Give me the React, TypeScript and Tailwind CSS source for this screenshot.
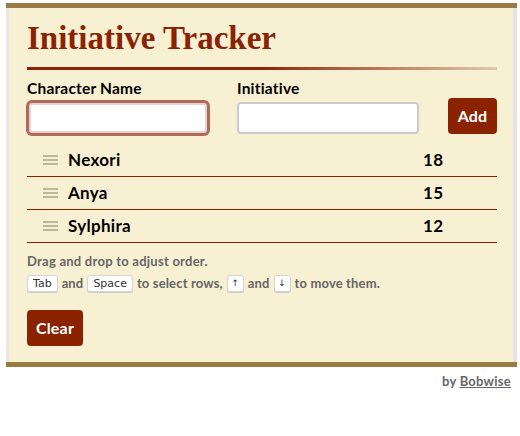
import React, { useState } from 'react';

interface Combatant {
  name: string;
  initiative: number;
}

const initialList: Combatant[] = [
  { name: 'Nexori', initiative: 18 },
  { name: 'Anya', initiative: 15 },
  { name: 'Sylphira', initiative: 12 },
];

const Kbd: React.FC<{ children: React.ReactNode; small?: boolean }> = ({ children, small }) => (
  <kbd
    className={`inline-flex items-center justify-center h-[17px] bg-white border border-[#d4d4d4] rounded-[3px] font-normal text-[#333] shadow-[0_1px_0_#ccc] [font-family:'DejaVu_Sans',sans-serif] leading-none tracking-normal ${
      small ? 'w-[17px] text-[9px]' : 'px-[5px] text-[11px]'
    }`}
  >
    {children}
  </kbd>
);

const DragHandle: React.FC = () => (
  <svg width="15" height="10" viewBox="0 0 15 10" className="shrink-0">
    <rect x="0" y="0" width="15" height="2" fill="#bdb79b" />
    <rect x="0" y="4" width="15" height="2" fill="#bdb79b" />
    <rect x="0" y="8" width="15" height="2" fill="#bdb79b" />
  </svg>
);

const App: React.FC = () => {
  const [list, setList] = useState<Combatant[]>(initialList);
  const [name, setName] = useState('');
  const [init, setInit] = useState('');

  const add = () => {
    if (!name.trim()) return;
    const next = [...list, { name: name.trim(), initiative: Number(init) || 0 }];
    next.sort((a, b) => b.initiative - a.initiative);
    setList(next);
    setName('');
    setInit('');
  };

  return (
    <div className="w-[520px] min-h-[436px] bg-white pt-[3px] [font-family:Lato,'Open_Sans',sans-serif] text-black">
      {/* Card */}
      <div className="ml-[6px] w-[511px] border-y-[5px] border-[#9a7b43]">
        <div className="bg-[#f8f0d3] border-l-[3px] border-r-[4px] border-l-[#e9e7e2] border-r-[#e4e3e6] pl-[18px] pr-[16px] pt-[10px] pb-[16px]">
          <h1 className="text-[33px] leading-[40px] font-bold text-[#8b2300] [font-family:'Liberation_Serif',serif]">
            Initiative Tracker
          </h1>
          <div className="mt-[9px] h-[3px] bg-gradient-to-r from-[#8b2300] via-[#8b2300] to-[#dccbaa]" />

          {/* Form */}
          <div className="mt-[8px] flex items-start">
            <div className="flex flex-col w-[182px]">
              <label className="text-[15.5px] font-bold leading-[20px] tracking-[0.2px]">Character Name</label>
              <input
                autoFocus
                value={name}
                onChange={(e) => setName(e.target.value)}
                className="mt-[5px] ml-[2px] h-[30px] w-[178px] bg-white rounded-[3px] border-2 border-[#e4d3d3] outline-none ring-[3px] ring-[#b06a57] px-[4px] text-[15px]"
              />
            </div>
            <div className="flex flex-col ml-[28px] w-[182px]">
              <label className="text-[15.5px] font-bold leading-[20px] tracking-[0.2px]">Initiative</label>
              <input
                value={init}
                onChange={(e) => setInit(e.target.value)}
                className="mt-[4px] h-[32px] w-[182px] bg-white rounded-[4px] border-2 border-[#cccccc] outline-none px-2 text-[15px]"
              />
            </div>
            <button
              onClick={add}
              className="ml-auto mt-[20px] h-[36px] w-[49px] rounded-[4px] bg-[#8b2300] text-white text-[16px] font-bold tracking-[0.2px]"
            >
              Add
            </button>
          </div>

          {/* List */}
          <ul className="mt-[10px]">
            {list.map((c) => (
              <li key={c.name} className="flex items-center h-[33px] border-b border-[#8b2300] pl-[16px]">
                <DragHandle />
                <span className="ml-[10px] text-[17px] font-bold flex-1 tracking-[0.3px]">{c.name}</span>
                <span className="w-[74px] text-[17px] font-bold tracking-[0.3px]">{c.initiative}</span>
              </li>
            ))}
          </ul>

          {/* Help */}
          <p className="mt-[9px] text-[13px] font-bold text-[#666] leading-[18px] tracking-[0.25px]">
            Drag and drop to adjust order.
          </p>
          <p className="mt-[4px] text-[13px] font-bold text-[#666] leading-[18px] tracking-[0.15px] flex items-center gap-[4px]">
            <Kbd>Tab</Kbd> and <Kbd>Space</Kbd> to select rows, <Kbd small>↑</Kbd> and <Kbd small>↓</Kbd> to move them.
          </p>

          <button
            onClick={() => setList([])}
            className="mt-[18px] h-[36px] w-[56px] rounded-[4px] bg-[#8b2300] text-white text-[16px] font-bold tracking-[0.2px]"
          >
            Clear
          </button>
        </div>
      </div>

      <div className="w-[517px] pr-[6px] pt-[5px] text-right text-[13px] font-bold text-[#666] tracking-[0.25px]">
        by <a href="#" className="underline">Bobwise</a>
      </div>
    </div>
  );
};

export default App;
